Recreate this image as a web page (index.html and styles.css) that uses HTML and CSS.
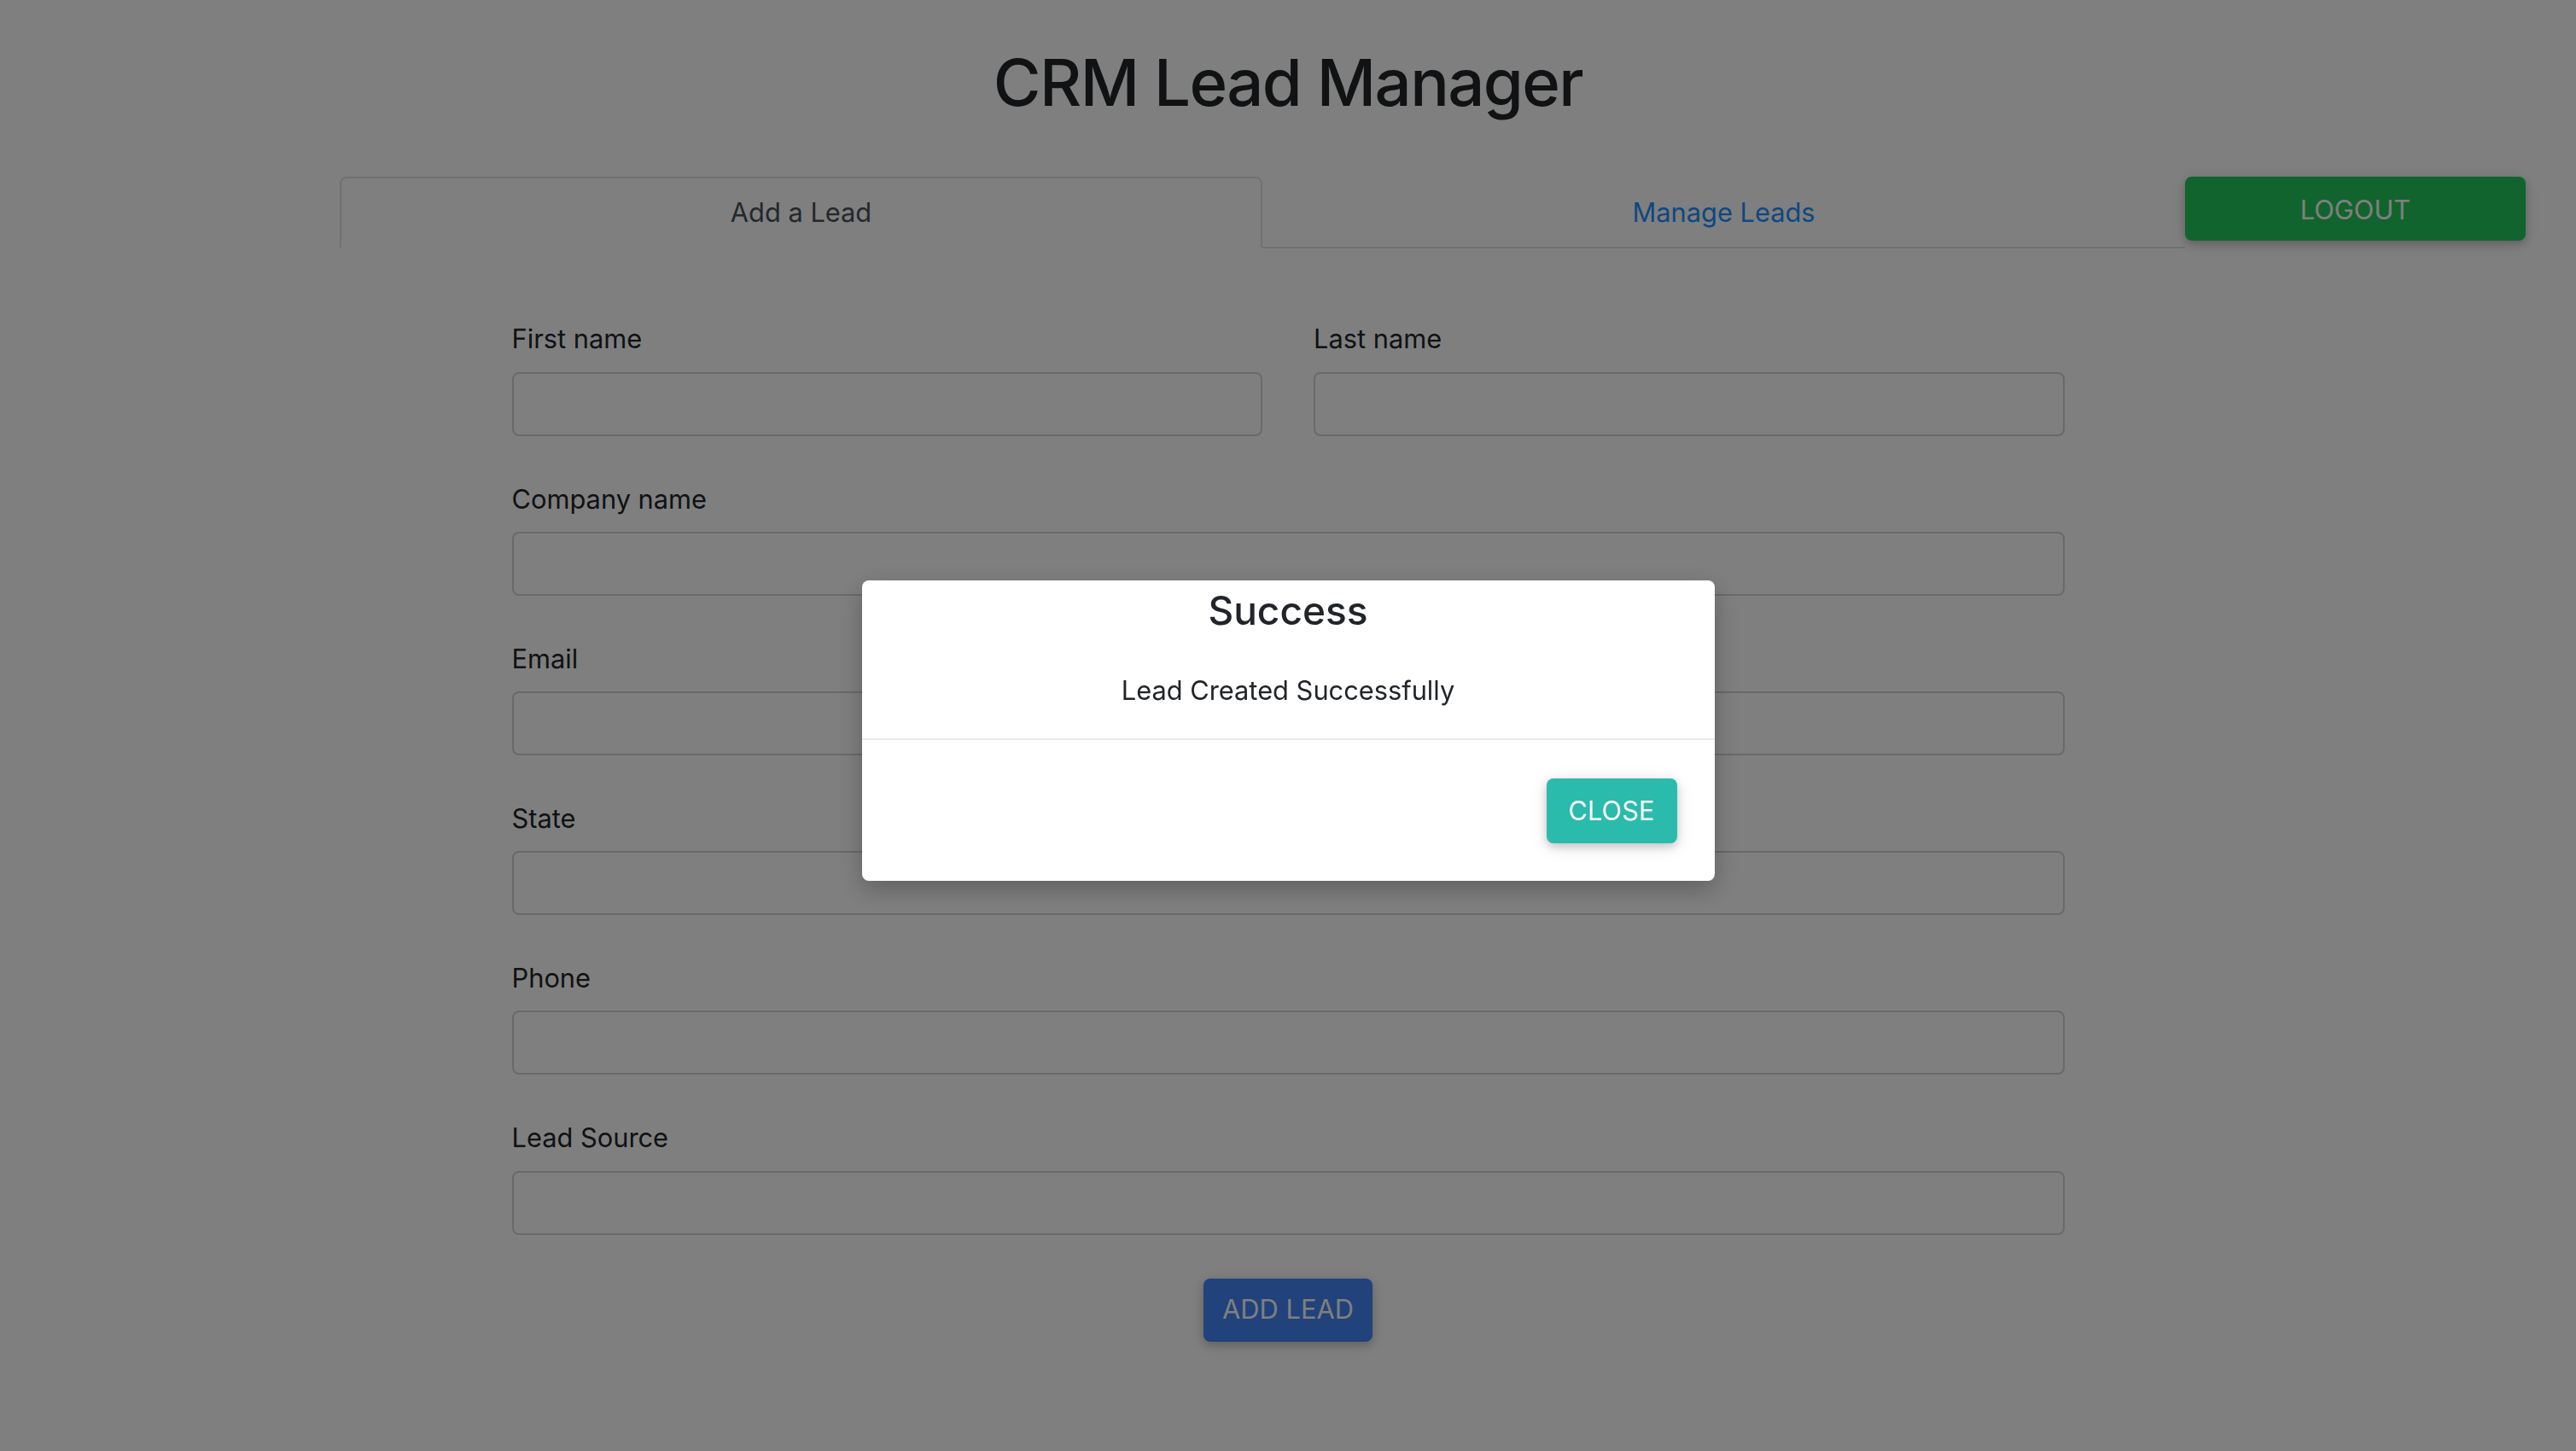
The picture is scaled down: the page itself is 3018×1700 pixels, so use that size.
FILE: index.html
```html
<!DOCTYPE html>
<html lang="en">
<head>
    <meta charset="UTF-8">
    <meta name="viewport" content="width=device-width, initial-scale=1.0">
    <title>CRM Lead Manager</title>
    <link rel="stylesheet" href="styles.css">
</head>
<body>
    <div class="page">
        <h1 class="title">CRM Lead Manager</h1>

        <div class="toolbar">
            <nav class="tabs">
                <a class="tab active" href="#">Add a Lead</a>
                <a class="tab" href="#">Manage Leads</a>
            </nav>
            <button class="btn btn-logout">Logout</button>
        </div>

        <form class="lead-form">
            <div class="form-row">
                <div class="form-group">
                    <label for="firstName">First name</label>
                    <input type="text" id="firstName" class="form-control">
                </div>
                <div class="form-group">
                    <label for="lastName">Last name</label>
                    <input type="text" id="lastName" class="form-control">
                </div>
            </div>
            <div class="form-group">
                <label for="company">Company name</label>
                <input type="text" id="company" class="form-control">
            </div>
            <div class="form-group">
                <label for="email">Email</label>
                <input type="email" id="email" class="form-control">
            </div>
            <div class="form-group">
                <label for="state">State</label>
                <input type="text" id="state" class="form-control">
            </div>
            <div class="form-group">
                <label for="phone">Phone</label>
                <input type="text" id="phone" class="form-control">
            </div>
            <div class="form-group">
                <label for="source">Lead Source</label>
                <input type="text" id="source" class="form-control">
            </div>
            <div class="form-actions">
                <button type="button" class="btn btn-add">Add Lead</button>
            </div>
        </form>
    </div>

    <!-- success popup after a lead is saved -->
    <div class="modal-backdrop">
        <div class="modal">
            <div class="modal-header">
                <h4 class="modal-title">Success</h4>
            </div>
            <div class="modal-body">Lead Created Successfully</div>
            <div class="modal-footer">
                <button type="button" class="btn btn-close">Close</button>
            </div>
        </div>
    </div>
</body>
</html>
```

FILE: styles.css
```css
html {
    font-size: 30.8px;
}
body {
    margin: 0;
    font-family: Inter, "Noto Sans", Arial, sans-serif;
    font-size: 1rem;
    line-height: 1.5;
    color: #212529;
    background: #fff;
}
.page {
    min-height: 100vh;
}
.title {
    margin: 51px 0 65px;
    text-align: center;
    font-size: 76px;
    font-weight: 500;
    line-height: 1.2;
    letter-spacing: -1.6px;
}

/* tabs + logout */
.toolbar {
    display: flex;
    align-items: flex-start;
    padding: 0 59px 0 398px;
}
.tabs {
    flex: 1;
    display: flex;
    border-bottom: 2px solid #dee2e6;
}
.tab {
    flex: 1;
    margin-bottom: -2px;
    padding: 17px 30px;
    text-align: center;
    color: #1e90ff;
    text-decoration: none;
    border: 2px solid transparent;
    border-radius: 8px 8px 0 0;
}
.tab.active {
    color: #495057;
    background: #fff;
    border-color: #dee2e6 #dee2e6 #fff;
}

.btn {
    display: inline-block;
    padding: 11px 24px;
    font-family: inherit;
    font-size: 1rem;
    line-height: 1.5;
    color: #fff;
    text-transform: uppercase;
    border: 0;
    border-radius: 8px;
    box-shadow: 0 4px 10px rgba(0, 0, 0, 0.16), 0 4px 20px rgba(0, 0, 0, 0.12);
    cursor: pointer;
}
.btn-logout {
    width: 399px;
    height: 75px;
    padding-top: 13px;
    background: #22c95a;
}
.btn-add {
    width: 198px;
    height: 74px;
    padding: 0;
    background: #4285f4;
}
.btn-close {
    width: 153px;
    height: 76px;
    padding: 0;
    background: #2bbbad;
}

/* form */
.lead-form {
    width: 1819px;
    margin: 83px auto 0;
}
.form-row {
    display: grid;
    grid-template-columns: 1fr 1fr;
    column-gap: 60px;
}
.form-group {
    margin-bottom: 51px;
}
.form-group label {
    display: block;
    margin-bottom: 15px;
}
.form-control {
    display: block;
    box-sizing: border-box;
    width: 100%;
    height: 75px;
    padding: 12px 23px;
    font-family: inherit;
    font-size: 1rem;
    color: #495057;
    background: #fff;
    border: 2px solid #ced4da;
    border-radius: 8px;
}
.form-actions {
    text-align: center;
}

/* modal */
.modal-backdrop {
    position: fixed;
    top: 0;
    left: 0;
    right: 0;
    bottom: 0;
    display: flex;
    align-items: center;
    justify-content: center;
    padding-top: 12px;
    background: rgba(0, 0, 0, 0.5);
}
.modal {
    width: 999px;
    background: #fff;
    border-radius: 8px;
    box-shadow: 0 10px 30px rgba(0, 0, 0, 0.25);
}
.modal-header {
    padding: 8px 30px 0;
    text-align: center;
}
.modal-title {
    margin: 0;
    font-size: 46px;
    font-weight: 500;
    line-height: 1.2;
}
.modal-body {
    padding: 42px 30px 33px;
    text-align: center;
}
.modal-footer {
    display: flex;
    justify-content: flex-end;
    padding: 45px 44px 44px;
    border-top: 2px solid #e9ecef;
}
```
